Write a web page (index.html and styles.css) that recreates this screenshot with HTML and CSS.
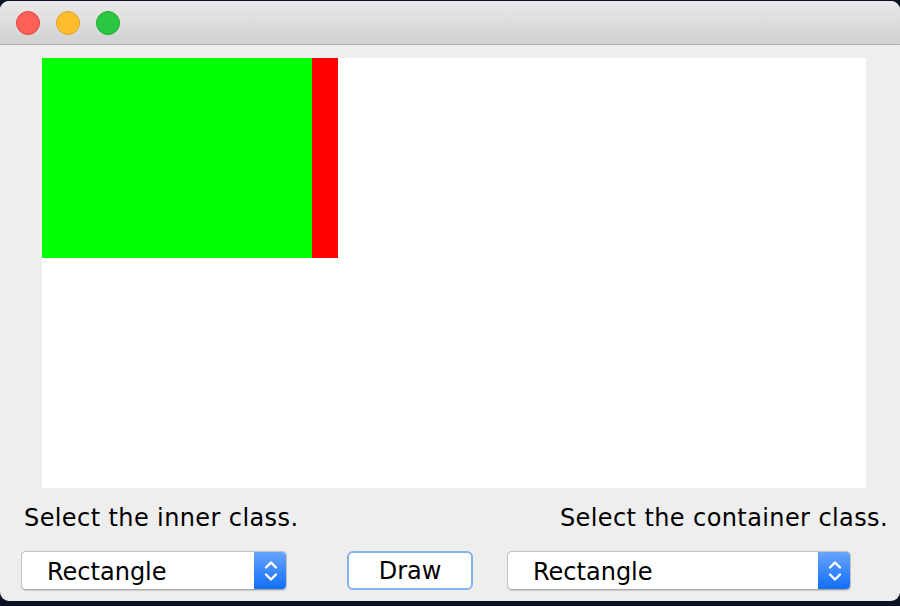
FILE: index.html
```html
<!DOCTYPE html>
<html>
<head>
<meta charset="utf-8">
<link rel="stylesheet" href="styles.css">
</head>
<body>
<div class="window">
  <div class="titlebar">
    <span class="light red"></span>
    <span class="light yellow"></span>
    <span class="light green"></span>
  </div>
  <div class="content">
    <div class="canvas">
      <div class="shape-green"></div>
      <div class="shape-red"></div>
    </div>
    <div class="labels">
      <span class="label">Select the inner class.</span>
      <span class="label">Select the container class.</span>
    </div>
    <div class="controls">
      <div class="combo combo-left">
        <span class="combo-text">Rectangle</span>
        <span class="combo-arrow">
          <svg width="16" height="24" viewBox="0 0 16 24"><path d="M3 8.5 L8 3.5 L13 8.5 M3 15.5 L8 20.5 L13 15.5" fill="none" stroke="#fff" stroke-width="2.4" stroke-linecap="round" stroke-linejoin="round"/></svg>
        </span>
      </div>
      <div class="button">Draw</div>
      <div class="combo combo-right">
        <span class="combo-text">Rectangle</span>
        <span class="combo-arrow">
          <svg width="16" height="24" viewBox="0 0 16 24"><path d="M3 8.5 L8 3.5 L13 8.5 M3 15.5 L8 20.5 L13 15.5" fill="none" stroke="#fff" stroke-width="2.4" stroke-linecap="round" stroke-linejoin="round"/></svg>
        </span>
      </div>
    </div>
  </div>
</div>
</body>
</html>
```

FILE: styles.css
```css
html, body {
  margin: 0;
  padding: 0;
  background: #0b1322;
  width: 900px;
  height: 606px;
  overflow: hidden;
}
.window {
  width: 900px;
  height: 600px;
  margin-top: 1px;
  border-radius: 9px;
  background: #eeeeee;
  overflow: hidden;
  display: flex;
  flex-direction: column;
  font-family: "DejaVu Sans", sans-serif;
  color: #000;
}
.titlebar {
  height: 43px;
  flex: none;
  background: linear-gradient(#e9e9e9, #d1d1d1);
  border-bottom: 1px solid #b1b1b1;
  display: flex;
  align-items: center;
  gap: 16px;
  padding-left: 16px;
  box-sizing: content-box;
}
.light {
  width: 24px;
  height: 24px;
  border-radius: 50%;
  box-sizing: border-box;
  display: block;
}
.red { background: #fe5f57; border: 1px solid #e2463f; }
.yellow { background: #febc2e; border: 1px solid #e1a226; }
.green { background: #2ac840; border: 1px solid #1eaa31; }
.content {
  flex: 1;
  padding: 13px 0 0 42px;
  display: flex;
  flex-direction: column;
}
.canvas {
  width: 824px;
  height: 430px;
  background: #ffffff;
  display: flex;
  align-items: flex-start;
}
.shape-green { width: 270px; height: 200px; background: #00ff00; }
.shape-red { width: 26px; height: 200px; background: #ff0000; }
.labels {
  margin-left: -18px;
  width: 864px;
  display: flex;
  justify-content: space-between;
  font-size: 24px;
  letter-spacing: 0.4px;
  height: 28px;
  line-height: 28px;
  margin-top: 16px;
}
.controls {
  margin-left: -21px;
  margin-top: 19px;
  display: flex;
  align-items: center;
}
.combo {
  height: 39px;
  box-sizing: border-box;
  background: #fff;
  border-radius: 5px;
  border: 1px solid #c4c4c4;
  border-bottom-color: #a8a8a8;
  display: flex;
  align-items: stretch;
  overflow: hidden;
  box-shadow: 0 0.5px 1px rgba(0,0,0,0.15);
}
.combo-left { width: 266px; }
.combo-right { width: 344px; margin-left: 34px; }
.combo-text {
  flex: 1;
  font-size: 24px;
  line-height: 37px;
  padding-top: 2px;
  padding-left: 25px;
}
.combo-arrow {
  width: 33px;
  background: linear-gradient(#6aa6fc, #0f6cf9);
  display: flex;
  align-items: center;
  justify-content: center;
  margin: -1px -1px -1px 0;
}
.button {
  width: 126px;
  height: 39px;
  box-sizing: border-box;
  margin-left: 60px;
  background: #fff;
  border: 2px solid #84b2ec;
  border-radius: 6px;
  font-size: 24px;
  line-height: 35px;
  padding-top: 1px;
  text-align: center;
}
```
